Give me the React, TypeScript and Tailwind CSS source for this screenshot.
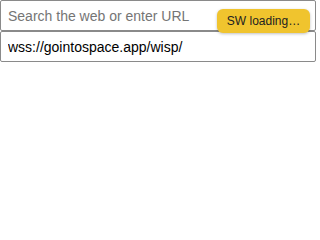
import React from "react";

export default function App() {
  return (
    <div className="relative w-[320px] h-[240px] bg-white font-['Liberation_Sans',Arial,sans-serif]">
      <div className="flex flex-col w-[316px]">
        <input
          className="h-[31px] w-full border border-[#8a8a8a] rounded-[2px] px-[7px] text-[14px] text-black placeholder:text-[#757575] outline-none font-['Liberation_Sans',Arial,sans-serif]"
          placeholder="Search the web or enter URL"
        />
        <input
          className="h-[31px] w-full border border-[#8a8a8a] rounded-[2px] px-[7px] text-[14px] text-black outline-none font-['Liberation_Sans',Arial,sans-serif]"
          defaultValue="wss://gointospace.app/wisp/"
        />
      </div>
      <div className="absolute left-[217px] top-[9px] w-[93px] h-[24px] rounded-[6px] bg-[#f0c42e] shadow-[0_1px_3px_rgba(0,0,0,0.25)] flex items-center justify-center text-[12px] text-[#222]">
        SW loading…
      </div>
    </div>
  );
}
